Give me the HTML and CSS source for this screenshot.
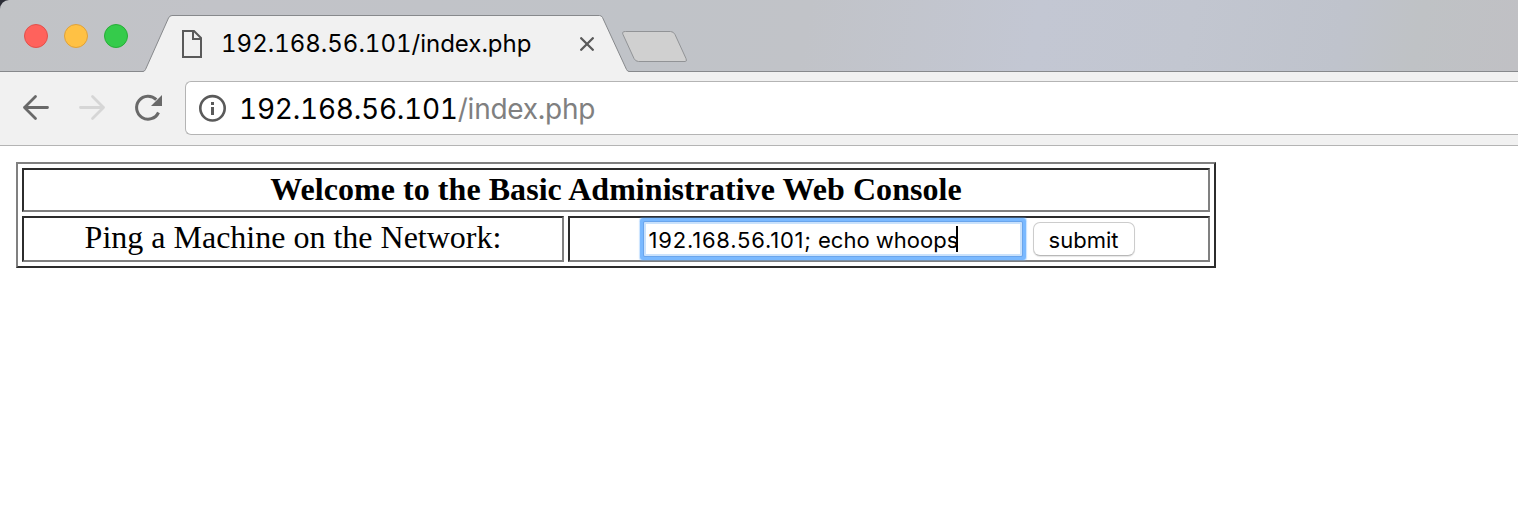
FILE: index.html
```html
<!DOCTYPE html>
<html lang="en">
<head>
<meta charset="utf-8">
<title>192.168.56.101/index.php</title>
<link rel="stylesheet" href="styles.css">
</head>
<body>
<header class="browser">
  <div class="tabstrip">
    <div class="lights">
      <span class="light close"></span>
      <span class="light minimize"></span>
      <span class="light maximize"></span>
    </div>
    <div class="tab">
      <svg class="tab-shape" width="492" height="72" viewBox="0 0 492 72">
        <path d="M0 72V71.5H3Q4.500 71.500 5.500 69.500L28.500 18Q29.700 15.500 32 15.500H459.500Q461.500 15.500 462.500 17.500L486.500 69.500Q487.500 71.500 489 71.500H492V72Z" fill="#f1f1f1"/>
        <path d="M0 71.500H3Q4.500 71.500 5.500 69.500L28.500 18Q29.700 15.500 32 15.500H459.500Q461.500 15.500 462.500 17.500L486.500 69.500Q487.500 71.500 489 71.500H492" fill="none" stroke="#87898c"/>
      </svg>
      <svg class="page-icon" width="20" height="28" viewBox="0 0 20 28" fill="none" stroke="#5a5a5a" stroke-width="2">
        <path d="M1 1H12L19 8V27H1Z"/><path d="M11 1V9H19"/>
      </svg>
      <span class="tab-title">192.168.56.101/index.php</span>
      <svg class="tab-close" width="14" height="14" viewBox="0 0 14 14" fill="none" stroke="#5a5a5a" stroke-width="2.300" stroke-linecap="round">
        <path d="M1.200 1.200L12.800 12.800M12.800 1.200L1.200 12.800"/>
      </svg>
    </div>
    <svg class="new-tab" width="67" height="34" viewBox="0 0 67 34">
      <path d="M4.500 1.500H49.500Q52.500 1.500 54 4.500L65 28.500Q66.500 31.500 64 31.500H17.500Q14.500 31.500 13 28.500L2 4.500Q.5 1.500 4.500 1.500Z" fill="#d0d0d0" stroke="#919396"/>
    </svg>
  </div>
  <div class="toolbar">
    <svg class="nav" width="28" height="28" viewBox="0 0 28 28" fill="none" stroke="#696969" stroke-width="2.800" stroke-linecap="round" stroke-linejoin="round">
      <path d="M25.500 13.500H2.500M13.500 2.500L2.500 13.500L13.500 24.500"/>
    </svg>
    <svg class="nav" width="28" height="28" viewBox="0 0 28 28" fill="none" stroke="#d6d6d6" stroke-width="2.800" stroke-linecap="round" stroke-linejoin="round">
      <path d="M2.500 13.500H25.500M14.500 2.500L25.500 13.500L14.500 24.500"/>
    </svg>
    <svg class="nav" width="28" height="28" viewBox="0 0 28 28">
      <path d="M22.300 5.600A11.500 11.500 0 1 0 24.500 18.500" fill="none" stroke="#696969" stroke-width="3" stroke-linecap="butt"/>
      <path d="M28 1V12H17Z" fill="#696969"/>
    </svg>
    <div class="address">
      <svg class="info" width="28" height="28" viewBox="0 0 28 28">
        <circle cx="14.500" cy="14.300" r="12.200" fill="none" stroke="#5a5a5a" stroke-width="2.600"/>
        <path d="M13 8H16V11H13ZM13 13H16V21H13Z" fill="#5a5a5a"/>
      </svg>
      <span class="url"><span class="host">192.168.56.101</span><span class="path">/index.php</span></span>
    </div>
  </div>
</header>
<main class="page">
  <table class="console">
    <colgroup><col class="label-column"><col></colgroup>
    <tr class="heading"><th colspan="2"><span class="welcome">Welcome to the Basic Administrative Web Console</span></th></tr>
    <tr class="ping">
      <td class="label"><span class="prompt">Ping a Machine on the Network:</span></td>
      <td class="controls">
        <div class="form">
          <div class="field"><span class="value"><span class="ip">192.168.56.101;</span> echo whoops</span><span class="caret"></span></div>
          <button class="submit" type="button">submit</button>
        </div>
      </td>
    </tr>
  </table>
</main>
</body>
</html>
```
FILE: styles.css
```css
* { box-sizing: border-box; }
body {
  margin: 0;
  background: #fff;
  color: #000;
  font-family: Inter, "Liberation Sans", sans-serif;
  overflow: hidden;
}
svg { display: block; flex: none; }
.browser { background: #2b2d36; }
.tabstrip {
  display: flex;
  height: 72px;
  border-top-left-radius: 9px;
  background:
    linear-gradient(#87898c, #87898c) 0 71px / 100% 1px no-repeat,
    linear-gradient(100deg, #c1c3c6 0%, #c2c3c8 14%, #c0c3c8 42%, #c1c3c8 53%, #c3c7d3 68%, #c2c6d0 78%, #bfc3cc 88%, #bfc2c5 93%, #c0c0c4 100%);
}
.lights {
  display: flex;
  gap: 16px;
  width: 140px;
  padding: 24px 0 0 24px;
}
.light { width: 24px; height: 24px; border: 1px solid; border-radius: 50%; }
.close { background: #ff625c; border-color: #e2504b; }
.minimize { background: #ffc144; border-color: #dfa13a; }
.maximize { background: #35cb4b; border-color: #27ae37; }
.tab {
  position: relative;
  display: flex;
  align-items: center;
  width: 492px;
  height: 72px;
  padding: 16px 38px 0 42px;
}
.tab-shape { position: absolute; left: 0; top: 0; }
.page-icon, .tab-title, .tab-close { position: relative; }
.tab-title {
  width: 363px;
  margin-left: 19px;
  font-size: 24px;
  line-height: 28px;
  font-variant-numeric: tabular-nums;
  white-space: nowrap;
}
.new-tab { margin: 30px 0 0 -11px; }
.toolbar {
  display: flex;
  align-items: center;
  height: 74px;
  padding: 0 0 2px 22px;
  border-bottom: 1px solid #b4b4b4;
  background: #f1f1f1;
}
.nav { margin-right: 28px; }
.address {
  display: flex;
  flex: 1;
  align-items: center;
  height: 54px;
  margin-left: -5px;
  padding-left: 12px;
  border: 1px solid #b4b4b4;
  border-right: 0;
  border-radius: 6px 0 0 6px;
  background: #fff;
}
.url {
  margin-left: 13px;
  padding-top: 2px;
  font-size: 28px;
  font-variant-numeric: tabular-nums;
  letter-spacing: -0.25px;
  white-space: nowrap;
}
.path { color: #808080; }
.page {
  padding: 16px;
  font-family: "Liberation Serif", "Times New Roman", serif;
  font-size: 32px;
  line-height: 36px;
}
.console {
  width: 1200px;
  table-layout: fixed;
  border: 2px solid;
  border-color: #808080 #2c2c2c #2c2c2c #808080;
  border-spacing: 4px;
}
.label-column { width: 542px; }
.console th, .console td {
  padding: 0;
  border: 2px solid;
  border-color: #2c2c2c #808080 #808080 #2c2c2c;
  text-align: center;
  white-space: nowrap;
}
.console th { padding-bottom: 2px; }
.console .label { padding-bottom: 4px; }
.welcome { letter-spacing: 0.05px; }
.heading { height: 44px; }
.ping { height: 46px; }
.form {
  display: flex;
  align-items: center;
  justify-content: center;
  height: 42px;
  font-family: Inter, "Liberation Sans", sans-serif;
}
.field {
  display: flex;
  align-items: center;
  width: 378px;
  height: 34px;
  padding-left: 3px;
  border: 2px solid #cae2fc;
  border-radius: 1px;
  background: #fff;
  box-shadow: 0 0 0 1px #6aa5ec, 0 0 0 4px rgba(104, 176, 255, .82), 0 0 1px 5px rgba(104, 176, 255, .35);
  font-size: 22px;
}
.value { padding-top: 2px; }
.ip { letter-spacing: 0.8px; }
.caret { width: 2px; height: 26px; margin-left: -2px; background: #000; }
.submit {
  width: 102px;
  height: 34px;
  margin-left: 11px;
  padding: 2px 0 0;
  border: 1px solid #ccc;
  border-bottom-color: #b8b8b8;
  border-radius: 7px;
  background: #fff;
  box-shadow: 0 1px 1px rgba(0, 0, 0, .1);
  color: #000;
  font: 22px Inter, "Liberation Sans", sans-serif;
}
```
